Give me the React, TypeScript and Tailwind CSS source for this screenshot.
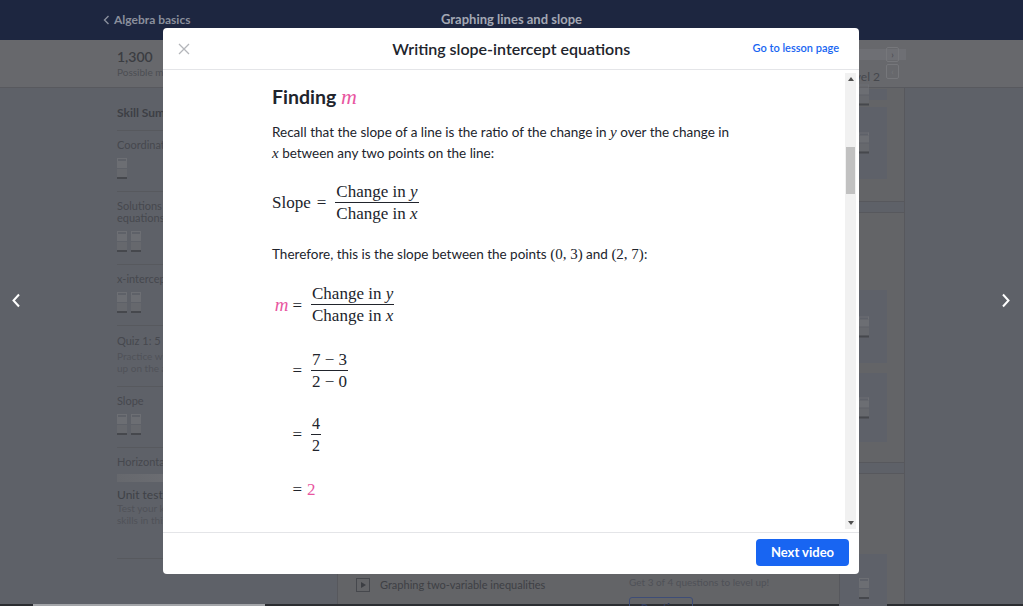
import React from "react";

const PINK = "text-[#e8569f]";

function Bars({ count = 2 }: { count?: number }) {
    return (
        <div className="flex gap-[4px]">
            {Array.from({ length: count }).map((_, i) => (
                <div key={i} className="flex w-[10px] flex-col">
                    <div className="h-[3px] border-x border-t border-[#6d6f74]" />
                    <div className="h-[7px] bg-[#6c6e73]" />
                    <div className="mt-[1px] h-[8px] bg-[#66686d]" />
                    <div className="h-[2px] bg-[#46484d]" />
                </div>
            ))}
        </div>
    );
}

function Frac({ top, bottom, small = false }: { top: React.ReactNode; bottom: React.ReactNode; small?: boolean }) {
    return (
        <span className="inline-flex flex-col items-center align-middle">
            <span className={`px-[1px] leading-[20px] ${small ? "text-[16px]" : ""}`}>{top}</span>
            <span className="h-[1px] w-full bg-[#21242c]" />
            <span className={`px-[1px] leading-[21px] ${small ? "text-[16px]" : ""}`}>{bottom}</span>
        </span>
    );
}

const V = ({ children }: { children: React.ReactNode }) => <i className="italic">{children}</i>;

function SideItem({ title, lines = [], bars }: { title: string; lines?: string[]; bars?: number }) {
    return (
        <div className="border-b border-[#57595e] pb-[12px] pt-[8px]">
            <div className="whitespace-nowrap text-[11px] leading-[12px] text-[#46484e]">{title}</div>
            {lines.map((l) => (
                <div key={l} className="whitespace-nowrap text-[11px] leading-[12px] text-[#46484e]">{l}</div>
            ))}
            {bars ? <div className="mt-[7px]"><Bars count={bars} /></div> : null}
        </div>
    );
}

function Card({ className, panels }: { className: string; panels: string[] }) {
    return (
        <div className={`relative border-y border-[#57585d] bg-[#636467] ${className}`}>
            {panels.map((p, i) => (
                <div key={i} className={`absolute right-[17px] w-[48px] bg-[#5e6169] ${p}`}>
                    <div className="absolute left-[20px] top-1/2 -translate-y-1/2"><Bars count={1} /></div>
                </div>
            ))}
        </div>
    );
}

export default function App() {
    return (
        <div className="relative flex h-[606px] w-[1023px] flex-col overflow-hidden bg-[#5e6168] font-['Lato',sans-serif]">
            {/* header */}
            <div className="grid h-[40px] shrink-0 grid-cols-3 items-center bg-[#1d2640]">
                <div className="flex items-center gap-[4px] pl-[103px] text-[12px] font-bold text-[#8a8f9c]">
                    <svg width="7" height="10" viewBox="0 0 7 10"><path d="M5.5 1 L1.5 5 L5.5 9" fill="none" stroke="#8a8f9c" strokeWidth="1.4" /></svg>
                    Algebra basics
                </div>
                <div className="text-center text-[13px] font-bold text-[#a3a8b4]">Graphing lines and slope</div>
                <div />
            </div>

            {/* band */}
            <div className="relative flex h-[48px] shrink-0 items-start border-b border-[#58595e] bg-[#67686c] pl-[117px] pt-[8px]">
                <div>
                    <div className="text-[14px] font-semibold leading-[18px] text-[#3b3d42]">1,300</div>
                    <div className="text-[10px] leading-[12px] text-[#4c4e53]">Possible mastery points</div>
                </div>
                <div className="absolute left-[560px] top-[9px] h-[11px] w-[346px] bg-[#6e6f74]" />
                <div className="absolute right-[143px] top-[28px] text-[12px] text-[#45474c]">Level 2</div>
                <div className="absolute left-[886px] top-[7px] flex h-[15px] w-[13px] items-center justify-center rounded-[2px] border border-[#76777b] text-[9px] text-[#45474c]">›</div>
                <div className="absolute left-[886px] top-[24px] flex h-[15px] w-[13px] items-center justify-center rounded-[2px] border border-[#76777b] text-[9px] text-[#76777b]">‹</div>
            </div>

            {/* main */}
            <div className="flex min-h-0 flex-1">
                <div className="w-[117px] shrink-0" />
                <div className="w-[220px] shrink-0">
                    <div className="border-b border-[#57595e] pb-[10px] pt-[18px] text-[12px] font-bold leading-[14px] text-[#3d3f45]">Skill Summary</div>
                    <SideItem title="Coordinate plane" bars={1} />
                    <SideItem title="Solutions to two-var" lines={["equations"]} bars={2} />
                    <SideItem title="x-intercepts and y-intercepts" bars={2} />
                    <div className="border-b border-[#57595e] pb-[12px] pt-[9px]">
                        <div className="whitespace-nowrap text-[11px] leading-[12px] text-[#46484e]">Quiz 1: 5 questions</div>
                        <div className="mt-[3px] whitespace-nowrap text-[10px] leading-[12px] text-[#505258]">Practice what you've learned, and level</div>
                        <div className="whitespace-nowrap text-[10px] leading-[12px] text-[#505258]">up on the above skills</div>
                    </div>
                    <SideItem title="Slope" bars={2} />
                    <div className="pt-[8px]">
                        <div className="text-[11px] leading-[12px] text-[#46484e]">Horizontal &amp; vertical lines</div>
                        <div className="mt-[6px] flex h-[8px] items-center">
                            <div className="h-[8px] w-[240px] bg-gradient-to-r from-[#66686d] via-[#727378] to-[#66686d]" />
                        </div>
                        <div className="mt-[6px] text-[12px] leading-[14px] text-[#3f4147]">Unit test</div>
                        <div className="text-[10px] leading-[12px] text-[#505258]">Test your knowledge of the</div>
                        <div className="text-[10px] leading-[12px] text-[#505258]">skills in this unit</div>
                        <div className="mt-[32px] border-b border-[#57595e]" />
                    </div>
                </div>
                <div className="flex w-[568px] shrink-0 flex-col gap-[10px] border-x border-[#57585d]">
                    <Card className="h-[114px] border-t-0" panels={["top-[1px] h-[11px]", "top-[19px] h-[72px]"]} />
                    <Card className="h-[251px]" panels={["top-[77px] h-[73px]", "top-[160px] h-[69px]"]} />
                    <div className="relative flex-1 border-t border-[#57585d] bg-[#636467]">
                        <div className="absolute right-[17px] top-[80px] h-[60px] w-[48px] bg-[#5e6169]">
                            <div className="absolute left-[20px] top-[24px]"><Bars count={1} /></div>
                        </div>
                        <div className="absolute bottom-0 left-0 right-0 flex h-[35px] items-start">
                            <div className="ml-[18px] mt-[9px] flex w-[273px] shrink-0 items-center gap-[10px]">
                                <div className="flex h-[14px] w-[14px] items-center justify-center border border-[#46484d]">
                                    <div className="ml-[1px] h-0 w-0 border-y-[3.5px] border-l-[5px] border-y-transparent border-l-[#3c3e43]" />
                                </div>
                                <span className="text-[11px] leading-[14px] text-[#3e4045]">Graphing two-variable inequalities</span>
                            </div>
                            <div className="mt-[6px] flex w-[210px] shrink-0 flex-col">
                                <span className="text-[10px] leading-[14px] text-[#4f5157]">Get 3 of 4 questions to level up!</span>
                                <span className="mt-[8px] h-[20px] w-[64px] rounded-[3px] border border-[#3e4d77] pt-[2px] text-center text-[11px] font-bold text-[#2f3c60]">Practice</span>
                            </div>
                            <div className="h-full border-l border-[#57585d]" />
                        </div>
                    </div>
                </div>
                <div className="flex-1" />
            </div>
            <div className="flex h-[2px] shrink-0 bg-[#2b2d31]">
                <div className="ml-[33px] w-[232px] bg-[#a3a5a9]" />
            </div>

            {/* carousel arrows */}
            <svg className="absolute left-[11px] top-[293px]" width="10" height="15" viewBox="0 0 10 15"><path d="M8 1.5 L2.5 7.5 L8 13.5" fill="none" stroke="#ffffff" strokeWidth="2" /></svg>
            <svg className="absolute left-[1001px] top-[293px]" width="10" height="15" viewBox="0 0 10 15"><path d="M2 1.5 L7.5 7.5 L2 13.5" fill="none" stroke="#ffffff" strokeWidth="2" /></svg>

            {/* modal */}
            <div className="absolute left-[163px] top-[28px] flex h-[546px] w-[696px] flex-col overflow-hidden rounded-[4px] bg-white text-[#21242c]">
                <div className="flex h-[42px] shrink-0 items-center border-b border-[#e4e5e8] px-[14px]">
                    <svg width="12" height="12" viewBox="0 0 12 12" className="ml-[1px]"><path d="M1 1 L11 11 M11 1 L1 11" stroke="#b4b6ba" strokeWidth="1.3" /></svg>
                    <div className="flex-1 pl-[80px] text-center text-[16px] font-semibold">Writing slope-intercept equations</div>
                    <div className="pr-[6px] text-[11px] font-semibold text-[#1865f2]">Go to lesson page</div>
                </div>
                <div className="flex min-h-0 flex-1">
                    <div className="min-w-0 flex-1 pl-[109px]">
                        <div className="w-[465px]">
                            <div className="mt-[13px] text-[19.5px] font-bold leading-[28px]">
                                Finding <span className={`font-['Liberation_Serif',serif] text-[22px] font-normal italic ${PINK}`}>m</span>
                            </div>
                            <p className="mt-[11px] text-[13.5px] leading-[21px]">
                                Recall that the slope of a line is the ratio of the change in <span className="font-['Liberation_Serif',serif] text-[15px] italic">y</span> over the change in <span className="font-['Liberation_Serif',serif] text-[15px] italic">x</span> between any two points on the line:
                            </p>
                            <div className="mt-[18px] flex h-[42px] items-center font-['Liberation_Serif',serif] text-[17px]">
                                <span>Slope</span>
                                <span className="mx-[6px]">=</span>
                                <span className="ml-[3px]"><Frac top={<>Change in <V>y</V></>} bottom={<>Change in <V>x</V></>} /></span>
                            </div>
                            <p className="mt-[20px] text-[13.5px] leading-[21px]">
                                Therefore, this is the slope between the points <span className="font-['Liberation_Serif',serif] text-[15px]">(0, 3)</span> and <span className="font-['Liberation_Serif',serif] text-[15px]">(2, 7)</span>:
                            </p>
                            <div className="mt-[19px] flex flex-col font-['Liberation_Serif',serif] text-[17px]">
                                <div className="flex h-[42px] items-center">
                                    <span className="w-[30px] text-right"><i className={`${PINK} mr-[4px] text-[19px]`}>m</i>=</span>
                                    <span className="ml-[9px]"><Frac top={<>Change in <V>y</V></>} bottom={<>Change in <V>x</V></>} /></span>
                                </div>
                                <div className="mt-[24px] flex h-[42px] items-center">
                                    <span className="w-[30px] text-right">=</span>
                                    <span className="ml-[9px]"><Frac top={<>7 − 3</>} bottom={<>2 − 0</>} /></span>
                                </div>
                                <div className="mt-[22px] flex h-[42px] items-center">
                                    <span className="w-[30px] text-right">=</span>
                                    <span className="ml-[9px]"><Frac small top="4" bottom="2" /></span>
                                </div>
                                <div className="mt-[24px] flex h-[20px] items-center">
                                    <span className="w-[30px] text-right">=</span>
                                    <span className={`ml-[5px] ${PINK}`}>2</span>
                                </div>
                            </div>
                        </div>
                    </div>
                    <div className="my-[3px] mr-[3px] flex w-[11px] flex-col items-center bg-[#f1f1f1]">
                        <div className="mt-[4px] h-0 w-0 border-x-[3px] border-b-[4px] border-x-transparent border-b-[#505050]" />
                        <div className="mt-[66px] h-[47px] w-[9px] bg-[#c1c1c1]" />
                        <div className="flex-1" />
                        <div className="mb-[4px] h-0 w-0 border-x-[3px] border-t-[4px] border-x-transparent border-t-[#505050]" />
                    </div>
                </div>
                <div className="flex h-[42px] shrink-0 items-start justify-end border-t border-[#e4e5e8] pr-[10px] pt-[6px]">
                    <button className="h-[27px] w-[93px] rounded-[4px] bg-[#1865f2] text-[13px] font-bold text-white">Next video</button>
                </div>
            </div>
        </div>
    );
}
